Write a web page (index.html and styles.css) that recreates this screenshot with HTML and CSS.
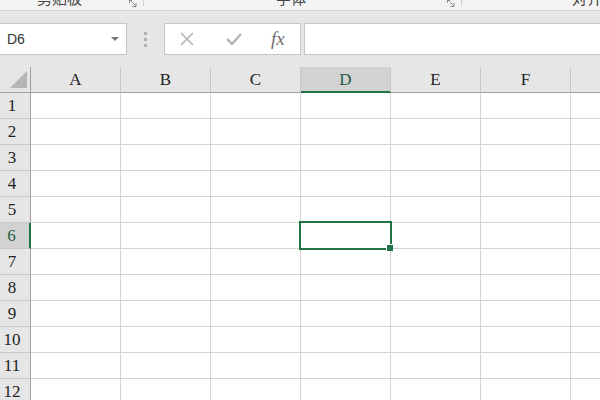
FILE: index.html
```html
<!DOCTYPE html>
<html lang="zh-CN">
<head>
  <meta charset="UTF-8">
  <title>Sheet</title>
  <link rel="stylesheet" href="styles.css">
</head>
<body>

  <div class="ribbon">
    <div class="group group-clip">
      <span class="group-label">剪贴板</span>
      <svg class="launcher" width="9" height="7" viewBox="0 0 9 7"><path d="M0.5 0 V3 M0.5 0.5 H3 M2.5 1.5 L7 6 M7 3 V6.5 H3.5" stroke="#888" fill="none" stroke-width="1"/></svg>
    </div>
    <div class="group group-font">
      <span class="group-label">字体</span>
      <svg class="launcher" width="9" height="7" viewBox="0 0 9 7"><path d="M0.5 0 V3 M0.5 0.5 H3 M2.5 1.5 L7 6 M7 3 V6.5 H3.5" stroke="#888" fill="none" stroke-width="1"/></svg>
    </div>
    <div class="group group-align">
      <span class="group-label">对齐方式</span>
    </div>
  </div>

  <div class="formula-bar">
    <div class="name-box">
      <span class="cell-ref">D6</span>
      <span class="drop-arrow"></span>
    </div>
    <div class="grip">
      <span></span><span></span><span></span>
    </div>
    <div class="fx-buttons">
      <svg class="fx-icon" width="16" height="16" viewBox="0 0 16 16"><path d="M2 2 L14 14 M14 2 L2 14" stroke="#b4b4b4" stroke-width="1.6" fill="none"/></svg>
      <svg class="fx-icon" width="18" height="16" viewBox="0 0 18 16"><path d="M2 8 L7 13 L16 3" stroke="#b4b4b4" stroke-width="2.4" fill="none"/></svg>
      <span class="fx-text">fx</span>
    </div>
    <div class="formula-input"></div>
  </div>

  <div class="sheet">
    <div class="grid" id="grid"></div>
    <div class="selection"></div>
    <div class="fill-handle"></div>
  </div>

  <script>
    const grid = document.getElementById('grid');
    const cols = ['A', 'B', 'C', 'D', 'E', 'F', 'G'];

    function addCell(cls, text) {
      const el = document.createElement('div');
      el.className = cls;
      if (text) el.textContent = text;
      grid.appendChild(el);
    }

    addCell('corner');
    cols.forEach(c => {
      addCell(c === 'D' ? 'col-head active' : 'col-head', c);
    });

    for (let r = 1; r <= 12; r++) {
      addCell(r === 6 ? 'row-head active' : 'row-head', String(r));
      cols.forEach(() => addCell('cell'));
    }
  </script>
</body>
</html>
```

FILE: styles.css
```css
body {
  margin: 0;
  width: 600px;
  height: 400px;
  overflow: hidden;
  background-color: #ffffff;
  font-family: 'Liberation Sans', 'Noto Sans CJK SC', sans-serif;
}

/* ribbon group labels, cut off at the top */
.ribbon {
  display: flex;
  height: 10px;
  background-color: #f3f3f3;
  border-bottom: 1px solid #d5d5d5;
  overflow: hidden;
}

.group {
  display: flex;
  align-items: flex-start;
  flex-shrink: 0;
  box-sizing: border-box;
  border-right: 1px solid #d0d0d0;
  height: 6px;
}

.group-clip {
  width: 144px;
  padding-left: 37px;
}

.group-font {
  width: 318px;
  padding-left: 132px;
}

.group-align {
  width: 300px;
  padding-left: 110px;
  border-right: none;
}

.group-label {
  font-size: 15px;
  line-height: 16px;
  margin-top: -10px;
  color: #444444;
  white-space: nowrap;
  font-family: 'Noto Sans CJK SC', sans-serif;
}

.launcher {
  margin-left: auto;
  margin-right: 5px;
}

/* formula bar */
.formula-bar {
  display: flex;
  align-items: flex-start;
  height: 56px;
  padding-top: 12px;
  box-sizing: border-box;
  background-color: #e6e6e6;
}

.name-box {
  display: flex;
  align-items: center;
  width: 127px;
  height: 32px;
  box-sizing: border-box;
  background-color: #ffffff;
  border: 1px solid #c6c6c6;
  border-left: none;
  padding-left: 7px;
  padding-right: 7px;
}

.cell-ref {
  font-size: 14px;
  color: #333333;
}

.drop-arrow {
  margin-left: auto;
  width: 0;
  height: 0;
  border-left: 4px solid transparent;
  border-right: 4px solid transparent;
  border-top: 4px solid #777777;
}

.grip {
  display: flex;
  flex-direction: column;
  gap: 3px;
  width: 37px;
  align-items: center;
  padding-top: 9px;
}

.grip span {
  width: 3px;
  height: 3px;
  background-color: #b0b0b0;
}

.fx-buttons {
  display: flex;
  align-items: center;
  width: 137px;
  height: 32px;
  box-sizing: border-box;
  background-color: #ffffff;
  border: 1px solid #c6c6c6;
  padding-left: 14px;
  gap: 30px;
}

.fx-text {
  font-family: 'Liberation Serif', serif;
  font-style: italic;
  font-size: 19px;
  color: #6e6e6e;
  margin-left: -2px;
}

.formula-input {
  flex: 1;
  height: 32px;
  margin-left: 3px;
  box-sizing: border-box;
  background-color: #ffffff;
  border: 1px solid #c6c6c6;
  border-right: none;
}

/* sheet grid */
.sheet {
  position: relative;
}

.grid {
  display: grid;
  grid-template-columns: 31px repeat(7, 90px);
  grid-auto-rows: 26px;
}

.grid > div {
  box-sizing: border-box;
  font-family: 'Liberation Serif', serif;
  font-size: 17px;
  color: #222222;
  display: flex;
  align-items: center;
  justify-content: center;
}

.corner {
  background-color: #e6e6e6;
  border-right: 1px solid #9f9f9f;
  border-bottom: 1px solid #9f9f9f;
  position: relative;
}

.corner::after {
  content: '';
  position: absolute;
  right: 3px;
  bottom: 4px;
  width: 0;
  height: 0;
  border-left: 17px solid transparent;
  border-bottom: 17px solid #b4b4b4;
}

.col-head {
  background-color: #e6e6e6;
  border-right: 1px solid #c6c6c6;
  border-bottom: 1px solid #9f9f9f;
  padding-top: 1px;
}

.col-head.active {
  background-color: #d2d2d2;
  border-bottom: 2px solid #217346;
  color: #1f5f45;
}

.row-head {
  background-color: #e6e6e6;
  border-right: 1px solid #9f9f9f;
  border-bottom: 1px solid #c8c8c8;
  padding-right: 6px;
}

.row-head.active {
  background-color: #d2d2d2;
  border-right: 2px solid #217346;
  color: #1f5f45;
}

.cell {
  border-right: 1px solid #d4d4d4;
  border-bottom: 1px solid #d4d4d4;
}

.selection {
  position: absolute;
  left: 299px;
  top: 154px;
  width: 93px;
  height: 29px;
  box-sizing: border-box;
  border: 2px solid #217346;
}

.fill-handle {
  position: absolute;
  left: 386px;
  top: 177px;
  width: 6px;
  height: 6px;
  background-color: #217346;
  border-left: 1px solid #ffffff;
  border-top: 1px solid #ffffff;
}
```
